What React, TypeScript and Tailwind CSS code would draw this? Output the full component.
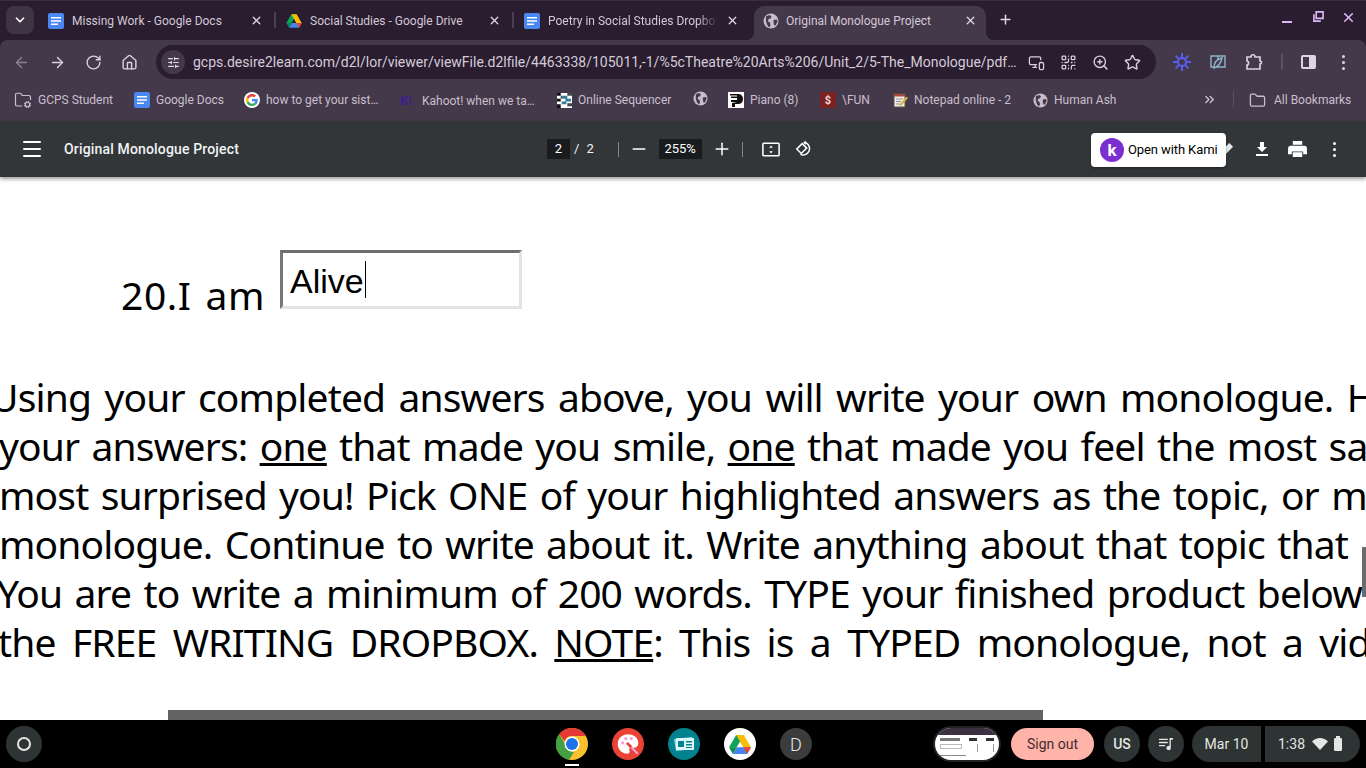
import {
  ArrowLeft,
  ArrowRight,
  ChevronDown,
  ChevronsRight,
  Folder,
  FolderCog,
  House,
  Menu,
  Minus,
  MonitorSmartphone,
  Plus,
  QrCode,
  RotateCw,
  SlidersHorizontal,
  Star,
  X,
  ZoomIn,
} from "lucide-react";
import type { ReactNode } from "react";

const ui = "font-['Roboto',sans-serif]";

function DocsIcon() {
  return (
    <svg viewBox="0 0 16 16" className="size-4 shrink-0">
      <rect width="16" height="16" rx="2" fill="#4a87f0" />
      <path d="M3 4h10v1.500H3zM3 7.200h10v1.500H3zM3 10.400h7v1.500H3z" fill="#fff" />
    </svg>
  );
}

function DriveIcon({ className = "size-4" }: { className?: string }) {
  return (
    <svg viewBox="0 0 24 22" className={`${className} shrink-0`}>
      <path d="M8 1h8L8.500 14H.5z" fill="#0fa35a" />
      <path d="M8 1h8l7.500 13h-8z" fill="#fbbc04" />
      <path d="M4.500 21l4-7h15l-4 7z" fill="#4285f4" />
      <path d="M.5 14h8l-4 7z" fill="#0b8a4a" />
      <path d="M23.500 14h-8l4 7z" fill="#ea4335" />
    </svg>
  );
}

function GlobeIcon({ className = "size-[15px]" }: { className?: string }) {
  return (
    <svg viewBox="0 0 16 16" className={`${className} shrink-0`}>
      <circle cx="8" cy="8" r="7.500" fill="#c6bcca" />
      <path d="M3 3.500l3.500-1.500 2 1.500-1 2-2 .5-.5 2.500 2 1 .5 3-1.500 2-2-3-1-3.500zM10.500 7l3.500-.5.5 2-2 4-1.500-.5-.5-3z" fill="#44394a" />
    </svg>
  );
}

function GoogleIcon() {
  return (
    <div className="flex size-4 shrink-0 items-center justify-center rounded-full bg-white">
      <svg viewBox="0 0 48 48" className="size-3">
        <path fill="#EA4335" d="M24 9.500c3.500 0 6.700 1.200 9.200 3.600l6.800-6.800C35.900 2.400 30.500 0 24 0 14.600 0 6.500 5.400 2.600 13.200l8 6.200C12.400 13.700 17.700 9.500 24 9.500z" />
        <path fill="#4285F4" d="M46.900 24.500c0-1.600-.1-3.100-.4-4.500H24v9h12.900c-.6 3-2.200 5.500-4.700 7.200l7.700 6c4.500-4.200 7-10.300 7-17.700z" />
        <path fill="#FBBC05" d="M10.500 28.600c-.5-1.400-.8-3-.8-4.600s.3-3.200.8-4.600l-8-6.200C.9 16.500 0 20.100 0 24s.9 7.500 2.600 10.800l7.900-6.200z" />
        <path fill="#34A853" d="M24 48c6.500 0 11.900-2.100 15.900-5.800l-7.700-6c-2.100 1.400-4.900 2.300-8.200 2.300-6.300 0-11.600-4.200-13.500-9.900l-8 6.200C6.500 42.600 14.600 48 24 48z" />
      </svg>
    </div>
  );
}

function SequencerIcon() {
  return (
    <svg viewBox="0 0 16 16" className="size-[15px] shrink-0">
      <rect width="16" height="16" fill="#fff" />
      <path d="M0 0h4v3H0zM0 6h4v3H0zM0 12h4v4H0z" fill="#111" />
      <path d="M6 3h5v3H6zM9 6h6v3H9zM5 9h5v3H5z" fill="#2f7f9d" />
      <path d="M4 3h2v3H4zM11 0h5v3h-5zM11 11h5v3h-5z" fill="#3c4a50" />
    </svg>
  );
}

function PianoIcon() {
  return (
    <svg viewBox="0 0 16 16" className="size-4 shrink-0">
      <rect width="16" height="16" fill="#fff" />
      <path d="M2 2h8c3 0 5 2 5 5s-2 5-5 5H7v3H4v-4l5-1H3V8h6V6H3V4.500h6V3.500H2z" fill="#111" />
    </svg>
  );
}

function FunIcon() {
  return (
    <div className={`flex size-4 shrink-0 items-center justify-center bg-[#7c2122] text-[11px] font-bold leading-none text-[#f1d9d9] ${ui}`}>
      $
    </div>
  );
}

function NotepadIcon() {
  return (
    <svg viewBox="0 0 16 16" className="size-4 shrink-0">
      <rect x="2" y="2" width="11" height="13" fill="#f3efe6" stroke="#5b5250" />
      <path d="M2 2h11v2.500H2z" fill="#a5483e" />
      <path d="M4 7h7M4 9.500h5M4 12h4" stroke="#8c8c8c" />
      <path d="M14.500 4.500l-6 7-1 2.500 2.500-1 6-7z" fill="#d2b13c" />
    </svg>
  );
}

function Tab({ icon, title, active, fade }: { icon: ReactNode; title: string; active?: boolean; fade?: boolean }) {
  return (
    <div
      className={`relative flex h-[34px] shrink-0 items-center ${
        active ? "mx-[2px] w-[232px] rounded-t-[10px] bg-[#44394a] pl-[9px] pr-[9px]" : "w-[238px] pb-[5px] pl-[10px] pr-[13px]"
      }`}
    >
      {active && (
        <>
          <div className="absolute -left-2 bottom-0 size-2 bg-[radial-gradient(circle_at_0_0,transparent_8px,#44394a_8px)]" />
          <div className="absolute -right-2 bottom-0 size-2 bg-[radial-gradient(circle_at_100%_0,transparent_8px,#44394a_8px)]" />
        </>
      )}
      <div className={`flex flex-1 items-center overflow-hidden ${active ? "pb-[5px]" : ""}`}>
        {icon}
        <span
          className={`${active ? "ml-[7px]" : "ml-[8px]"} flex-1 overflow-hidden whitespace-nowrap text-[12px] leading-4 text-[#d3c8d7] ${fade ? "[mask-image:linear-gradient(to_right,black_88%,transparent_100%)]" : ""}`}
        >
          {title}
        </span>
        <X className="ml-2 size-[13px] shrink-0 text-[#e2d8e6]" strokeWidth={2.4} />
      </div>
      {!active && !fade && <div className="absolute right-0 top-[6px] h-4 w-0.5 bg-[#4a3f50]" />}
    </div>
  );
}

function Mark({ icon, label, width }: { icon: ReactNode; label?: string; width: string }) {
  return (
    <div className={`flex shrink-0 items-center gap-[6px] ${width}`}>
      {icon}
      {label && <span className="whitespace-nowrap text-[12px] text-[#c9bfcd]">{label}</span>}
    </div>
  );
}

function TabStrip() {
  return (
    <div className="flex h-10 items-end border-t border-[#3a2f40] pl-[6px]">
      <div className="mb-[6px] flex size-7 shrink-0 items-center justify-center rounded-lg bg-[#3f3445]">
        <ChevronDown className="size-[14px] text-white" strokeWidth={3} />
      </div>
      <div className="ml-[4px] flex">
        <Tab icon={<DocsIcon />} title="Missing Work - Google Docs" />
        <Tab icon={<DriveIcon />} title="Social Studies - Google Drive" />
        <Tab icon={<DocsIcon />} title="Poetry in Social Studies Dropbox" fade />
        <Tab icon={<GlobeIcon className="size-4" />} title="Original Monologue Project" active />
      </div>
      <Plus className="mb-[13px] ml-[10px] size-[15px] text-[#e2d8e6]" strokeWidth={2.4} />
      <div className="mb-[15px] ml-auto flex items-center gap-[21px] pr-[10px]">
        <div className="mt-[8px] h-0.5 w-[10px] bg-[#dcb6f5]" />
        <svg viewBox="0 0 12 12" className="-mt-[2px] size-[11px] text-[#dcb6f5]" fill="none" stroke="currentColor" strokeWidth="1.800">
          <path d="M3.500 1h7.500v7H3.500z" />
          <path d="M1 3.500v7.500h7.500" />
        </svg>
        <X className="-ml-[4px] size-[15px] text-[#dcb6f5]" strokeWidth={2.6} />
      </div>
    </div>
  );
}

function AddressBar() {
  const iconClass = "size-[17px] text-[#d9cfdd]";
  return (
    <div className="flex h-[44px] items-center">
      <div className="flex w-[156px] shrink-0 items-center gap-[19px] pl-[13px]">
        <ArrowLeft className="size-[17px] text-[#8a7f8e]" strokeWidth={2} />
        <ArrowRight className={iconClass} strokeWidth={2} />
        <RotateCw className={iconClass} strokeWidth={2} />
        <House className={iconClass} strokeWidth={2} />
      </div>
      <div className="flex h-[34px] w-[1000px] shrink-0 items-center rounded-full bg-[#291d2f] pl-[5px]">
        <div className="flex size-6 shrink-0 items-center justify-center rounded-full bg-[#44394a]">
          <SlidersHorizontal className="size-[13px] text-[#e2d8e6]" strokeWidth={2.2} />
        </div>
        <span className="ml-[8px] w-[826px] shrink-0 whitespace-nowrap text-[14px] text-[#d5cbd9]">
          gcps.desire2learn.com/d2l/lor/viewer/viewFile.d2lfile/4463338/105011,-1/%5cTheatre%20Arts%206/Unit_2/5-The_Monologue/pdf…
        </span>
        <div className="ml-[9px] flex items-center gap-[15px]">
          <MonitorSmartphone className={iconClass} strokeWidth={1.800} />
          <QrCode className={iconClass} strokeWidth={1.800} />
          <ZoomIn className={iconClass} strokeWidth={2} />
          <Star className={iconClass} strokeWidth={2} />
        </div>
      </div>
      <div className="flex flex-1 items-center pl-[17px]">
        <svg viewBox="0 0 18 18" className="size-[18px]" stroke="#5a5cf0" strokeWidth="2" fill="none">
          <circle cx="9" cy="9" r="4" />
          <path d="M9 0v5M9 13v5M0 9h5M13 9h5M2.600 2.600l3.500 3.500M11.900 11.900l3.500 3.500M2.600 15.400l3.500-3.500M11.900 6.100l3.500-3.500" />
        </svg>
        <svg viewBox="0 0 18 18" className="ml-[18px] size-[18px]" stroke="#8fb4c8" strokeWidth="1.400" fill="none">
          <path d="M2 3h14v11H2zM9 3v11" />
          <path d="M5 15c0-5 3-9 8-10-1 5-3 8-8 10z" fill="#44394a" />
        </svg>
        <svg viewBox="0 0 18 18" className="ml-[18px] size-[18px]" stroke="#d9cfdd" strokeWidth="1.700" fill="none">
          <path d="M2 4h4c0-3 4-3 4 0h5v4c2 0 2 3 0 3v5H2v-4c2 0 2-4 0-4z" />
        </svg>
        <div className="ml-[18px] h-4 w-0.5 bg-[#5c5161]" />
        <div className="ml-[18px] flex h-[14px] w-[15px] overflow-hidden rounded-[2px] border-2 border-[#e0d3e6]">
          <div className="w-1/2" />
          <div className="w-1/2 bg-[#e0d3e6]" />
        </div>
        <div className="ml-[26px] flex flex-col gap-[3px]">
          <div className="size-[3px] rounded-full bg-[#e0d3e6]" />
          <div className="size-[3px] rounded-full bg-[#e0d3e6]" />
          <div className="size-[3px] rounded-full bg-[#e0d3e6]" />
        </div>
      </div>
    </div>
  );
}

function BookmarksBar() {
  return (
    <div className="flex h-[37px] items-start pl-[14px] pt-[7px]">
      <Mark width="w-[120px]" icon={<FolderCog className="size-[18px] text-[#c9bfcd]" strokeWidth={1.600} />} label="GCPS Student" />
      <Mark width="w-[110px]" icon={<DocsIcon />} label="Google Docs" />
      <Mark width="w-[156px]" icon={<GoogleIcon />} label="how to get your sist…" />
      <Mark width="w-[157px]" icon={<span className={`w-[16px] text-[13px] font-bold text-[#3d1f8f] ${ui}`}>K!</span>} label="Kahoot! when we ta…" />
      <Mark width="w-[136px]" icon={<SequencerIcon />} label="Online Sequencer" />
      <Mark width="w-[35px]" icon={<GlobeIcon />} />
      <Mark width="w-[92px]" icon={<PianoIcon />} label="Piano (8)" />
      <Mark width="w-[72px]" icon={<FunIcon />} label="\FUN" />
      <Mark width="w-[141px]" icon={<NotepadIcon />} label="Notepad online - 2" />
      <Mark width="w-[169px]" icon={<GlobeIcon />} label="Human Ash" />
      <ChevronsRight className="mt-[1px] size-[15px] shrink-0 text-[#d9cfdd]" strokeWidth={2} />
      <div className="ml-[16px] h-4 w-px bg-[#5c5161]" />
      <div className="ml-[15px] flex items-center gap-[8px]">
        <Folder className="size-[17px] text-[#c9bfcd]" strokeWidth={1.800} />
        <span className="whitespace-nowrap text-[12px] text-[#c9bfcd]">All Bookmarks</span>
      </div>
    </div>
  );
}

function PdfToolbar() {
  return (
    <div className="relative z-10 flex h-[56px] items-center bg-[#323639] shadow-[0_2px_4px_rgba(0,0,0,0.4)]">
      <Menu className="ml-[20px] size-6 shrink-0 text-white" strokeWidth={2} />
      <span className="ml-[20px] w-[483px] shrink-0 text-[14px] font-medium tracking-[0.16px] text-[#f1f3f4]">Original Monologue Project</span>
      <div className="flex h-5 w-[23px] shrink-0 items-center justify-center bg-[#191b1c] text-[13px] text-white">2</div>
      <span className="ml-[4px] text-[13px] text-[#f1f3f4]">/</span>
      <span className="ml-[7px] text-[13px] text-[#f1f3f4]">2</span>
      <div className="ml-[24px] h-[15px] w-px bg-[#80868b]" />
      <Minus className="ml-[10px] size-5 text-white" strokeWidth={1.800} />
      <div className="ml-[10px] flex h-5 w-[43px] items-center justify-center bg-[#191b1c] text-[13px] text-white">255%</div>
      <Plus className="ml-[10px] size-5 text-white" strokeWidth={1.800} />
      <div className="ml-[10px] h-[15px] w-px bg-[#80868b]" />
      <svg viewBox="0 0 20 16" className="ml-[19px] h-[15px] w-[18px]" fill="none" stroke="white" strokeWidth="1.700">
        <rect x="1" y="1" width="18" height="14" rx="1" />
        <path d="M10 3.500l2 2.500H8zM10 12.500l2-2.500H8z" fill="white" stroke="none" />
      </svg>
      <svg viewBox="0 0 20 20" className="ml-[15px] size-[18px]" fill="none" stroke="white" strokeWidth="1.700">
        <path d="M8 4l-6 6 5 5 6-6z" />
        <path d="M10 3h2a7 7 0 1 1-6 13" />
        <path d="M12 .5v5L9 3z" fill="white" stroke="none" />
      </svg>
      <svg viewBox="0 0 16 16" className="ml-[406px] size-[15px] text-[#e8eaed]" fill="currentColor">
        <path d="M11 1l4 4-9 9-5 1 1-5z" />
      </svg>
      <svg viewBox="0 0 16 16" className="ml-[20px] size-[16px] text-white" fill="currentColor">
        <path d="M6 1h4v5h3l-5 5-5-5h3zM2 13h12v2H2z" />
      </svg>
      <svg viewBox="0 0 20 18" className="ml-[18px] h-[17px] w-[19px] text-white" fill="currentColor">
        <path d="M5 0h10v4H5zM3 5h14a3 3 0 0 1 3 3v6h-4v-3H4v3H0V8a3 3 0 0 1 3-3zM5 12h10v5H5z" />
      </svg>
      <div className="ml-[26px] flex flex-col gap-[3px]">
        <div className="size-[3px] rounded-full bg-white" />
        <div className="size-[3px] rounded-full bg-white" />
        <div className="size-[3px] rounded-full bg-white" />
      </div>
      <div className="absolute left-[1091px] top-[12px] flex h-[34px] w-[135px] items-center rounded-[4px] bg-white pl-[9px] shadow-[0_1px_3px_rgba(0,0,0,0.35)]">
        <div className="flex size-6 shrink-0 items-center justify-center rounded-full bg-[#7b2fd0] text-[17px] font-bold leading-none text-white">k</div>
        <span className="ml-[4px] whitespace-nowrap text-[13px] tracking-[-0.1px] text-black">Open with Kami</span>
      </div>
    </div>
  );
}

const lines: { text: ReactNode; style: string }[] = [
  { text: "Using your completed answers above, you will write your own monologue. H", style: "-ml-[10px] [word-spacing:4px]" },
  {
    text: (
      <>
        your answers: <u>one</u> that made you smile, <u>one</u> that made you feel the most sa
      </>
    ),
    style: "-ml-[1px] [word-spacing:3px]",
  },
  { text: "most surprised you! Pick ONE of your highlighted answers as the topic, or m", style: "-ml-[1px] [word-spacing:3px]" },
  { text: "monologue. Continue to write about it. Write anything about that topic that", style: "-ml-[1px] [word-spacing:3px]" },
  { text: "You are to write a minimum of 200 words. TYPE your finished product below", style: "-ml-[3px] [word-spacing:3px]" },
  {
    text: (
      <>
        the FREE WRITING DROPBOX. <u>NOTE</u>: This is a TYPED monologue, not a vid
      </>
    ),
    style: "-ml-[2px] [word-spacing:7px]",
  },
];

function PdfPage() {
  return (
    <div className="relative h-[543px] overflow-hidden bg-white font-['Noto_Sans',sans-serif] text-black">
      <div className="ml-[121px] flex h-[132px] items-start pt-[73px]">
        <span className="mt-[20px] w-[159px] shrink-0 text-[39px] leading-[49px] tracking-[0.6px] [word-spacing:3px]">20.I am</span>
        <div className="flex h-[59px] w-[242px] items-start border-[3px] border-b-[#e3e3e3] border-l-[#777777] border-r-[#e3e3e3] border-t-[#6e6e6e] pl-[7px] pt-[9px] font-['Liberation_Sans',sans-serif] text-[34px] leading-[38px]">
          Alive
          <span className="-mt-[1px] ml-px h-[37px] w-px bg-black" />
        </div>
      </div>
      <div className="mt-[63px] flex flex-col">
        {lines.map((line, i) => (
          <div key={i} className={`${line.style} whitespace-nowrap text-[39px] leading-[49px] tracking-[-0.85px]`}>
            {line.text}
          </div>
        ))}
      </div>
      <div className="ml-[168px] mt-[44px] h-[10px] w-[875px] bg-[#636363]" />
      <div className="absolute right-0 top-[370px] h-[50px] w-1 bg-[#6b6b6b]" />
    </div>
  );
}

function Shelf() {
  return (
    <div className={`flex h-12 items-center bg-black ${ui}`}>
      <div className="ml-[6px] flex size-9 shrink-0 items-center justify-center rounded-full bg-[#2e3333]">
        <div className="size-[14px] rounded-full border-2 border-[#e3e6e4]" />
      </div>
      <div className="relative ml-[514px] size-8 shrink-0">
        <svg viewBox="0 0 32 32" className="size-8">
          <circle cx="16" cy="16" r="16" fill="#fbc02d" />
          <path d="M16 0a16 16 0 0 1 13.900 8H16a8 8 0 0 0-7.500 5.200L3.200 6A16 16 0 0 1 16 0z" fill="#e53935" />
          <path d="M3.200 6l6.500 11.500A8 8 0 0 0 18 24l-4.800 7.800A16 16 0 0 1 3.200 6z" fill="#43a047" />
          <circle cx="16" cy="16" r="7.500" fill="#fff" />
          <circle cx="16" cy="16" r="6" fill="#1a73e8" />
        </svg>
        <div className="absolute left-[9px] top-[36px] h-0.5 w-[14px] bg-white" />
      </div>
      <div className="ml-[24px] flex size-8 shrink-0 items-center justify-center rounded-full bg-[#ea4335]">
        <svg viewBox="0 0 24 24" className="size-[26px]">
          <path d="M12 3C6.500 3 2.500 7 2.500 12s4 9 9 9c1.500 0 2-1 2-2 0-1.500-1-2 0-3 1-.8 2-.5 3.500-.5 3 0 4.500-2 4.500-4.500C21.500 6.500 17.500 3 12 3z" fill="#fff" />
          <circle cx="7" cy="11" r="1.500" fill="#f4a3d8" />
          <circle cx="10" cy="7" r="1.500" fill="#f4a3d8" />
          <circle cx="15" cy="7" r="1.500" fill="#f4a3d8" />
          <path d="M12 12l9 9" stroke="#f4a3d8" strokeWidth="2" />
          <path d="M11 11l4 4" stroke="#ea4335" strokeWidth="2.500" />
        </svg>
      </div>
      <div className="ml-[24px] flex size-8 shrink-0 items-center justify-center rounded-full bg-[#00838f]">
        <svg viewBox="0 0 24 24" className="size-6">
          <path d="M2 7l18-2 2 12-18 2z" fill="#80deea" />
          <rect x="4" y="6" width="18" height="12" rx="1" fill="#e0f7fa" />
          <rect x="6" y="9" width="6" height="6" fill="#00838f" />
          <path d="M14 9h6v1.500h-6zM14 12h6v1.500h-6zM14 15h6v1h-6z" fill="#00838f" />
        </svg>
      </div>
      <div className="ml-[24px] flex size-8 shrink-0 items-center justify-center rounded-full bg-white">
        <DriveIcon className="h-[21px] w-[24px]" />
      </div>
      <div className="ml-[24px] flex size-8 shrink-0 items-center justify-center rounded-full bg-[#3c3c3c] text-[18px] font-light text-[#e8eaed]">D</div>
      <div className="relative ml-[121px] flex h-9 w-[68px] shrink-0 flex-col gap-[3px] overflow-hidden rounded-full border-2 border-[#222] bg-white px-[5px] py-[4px]">
        <div className="absolute inset-x-0 top-0 h-[7px] bg-[#3b3040]" />
        <div className="mt-[6px] flex justify-between">
          <div className="h-[3px] w-[20px] bg-[#777]" />
          <div className="h-[3px] w-[8px] bg-[#333]" />
          <div className="h-[3px] w-[8px] bg-[#333]" />
        </div>
        <div className="flex justify-between">
          <div className="h-[5px] w-[22px] border border-[#bbb]" />
          <div className="h-[8px] w-px bg-[#999]" />
          <div className="h-[8px] w-px bg-[#999]" />
        </div>
        <div className="h-[2px] w-[26px] bg-[#888]" />
      </div>
      <div className="ml-[10px] flex h-8 w-[83px] shrink-0 items-center justify-center rounded-full bg-[#ffb4a9] text-[14px] text-[#442b2d]">Sign out</div>
      <div className="ml-[10px] flex size-9 shrink-0 items-center justify-center rounded-full bg-[#2e3333] text-[14px] font-medium text-[#e3e6e4]">US</div>
      <div className="ml-2 flex size-9 shrink-0 items-center justify-center rounded-full bg-[#2e3333]">
        <svg viewBox="0 0 18 16" className="h-[14px] w-[16px]" fill="#e3e6e4">
          <path d="M1 2h10v1.500H1zM1 5.500h10V7H1zM1 9h7v1.500H1z" />
          <path d="M13 1h4v2h-2.500v9.500a2.500 2.500 0 1 1-1.500-2.300z" />
        </svg>
      </div>
      <div className="ml-2 flex h-9 w-[69px] shrink-0 items-center justify-center rounded-l-full rounded-r-[4px] bg-[#2e3333] text-[14px] text-[#e3e6e4]">Mar 10</div>
      <div className="ml-1 flex h-9 w-[95px] shrink-0 items-center rounded-l-[4px] rounded-r-full bg-[#2e3333] pl-[13px] text-[14px] text-[#e3e6e4]">
        1:38
        <svg viewBox="0 0 16 12" className="ml-[7px] h-[12px] w-[16px]" fill="#e3e6e4">
          <path d="M8 12L0 3.500C2 1.300 5 0 8 0s6 1.300 8 3.500z" />
        </svg>
        <div className="relative ml-[6px] h-[13px] w-[8px] rounded-[1px] border border-[#e3e6e4] bg-[#e3e6e4]">
          <div className="absolute -top-[3px] left-[1px] h-[2px] w-[4px] bg-[#e3e6e4]" />
        </div>
      </div>
    </div>
  );
}

export default function App() {
  return (
    <div className={`flex h-screen w-[1366px] flex-col overflow-hidden bg-white ${ui}`}>
      <div className="bg-[#291d2f]">
        <TabStrip />
        <div className="h-[81px] rounded-t-lg bg-[#44394a]">
          <AddressBar />
          <BookmarksBar />
        </div>
      </div>
      <PdfToolbar />
      <PdfPage />
      <Shelf />
    </div>
  );
}
